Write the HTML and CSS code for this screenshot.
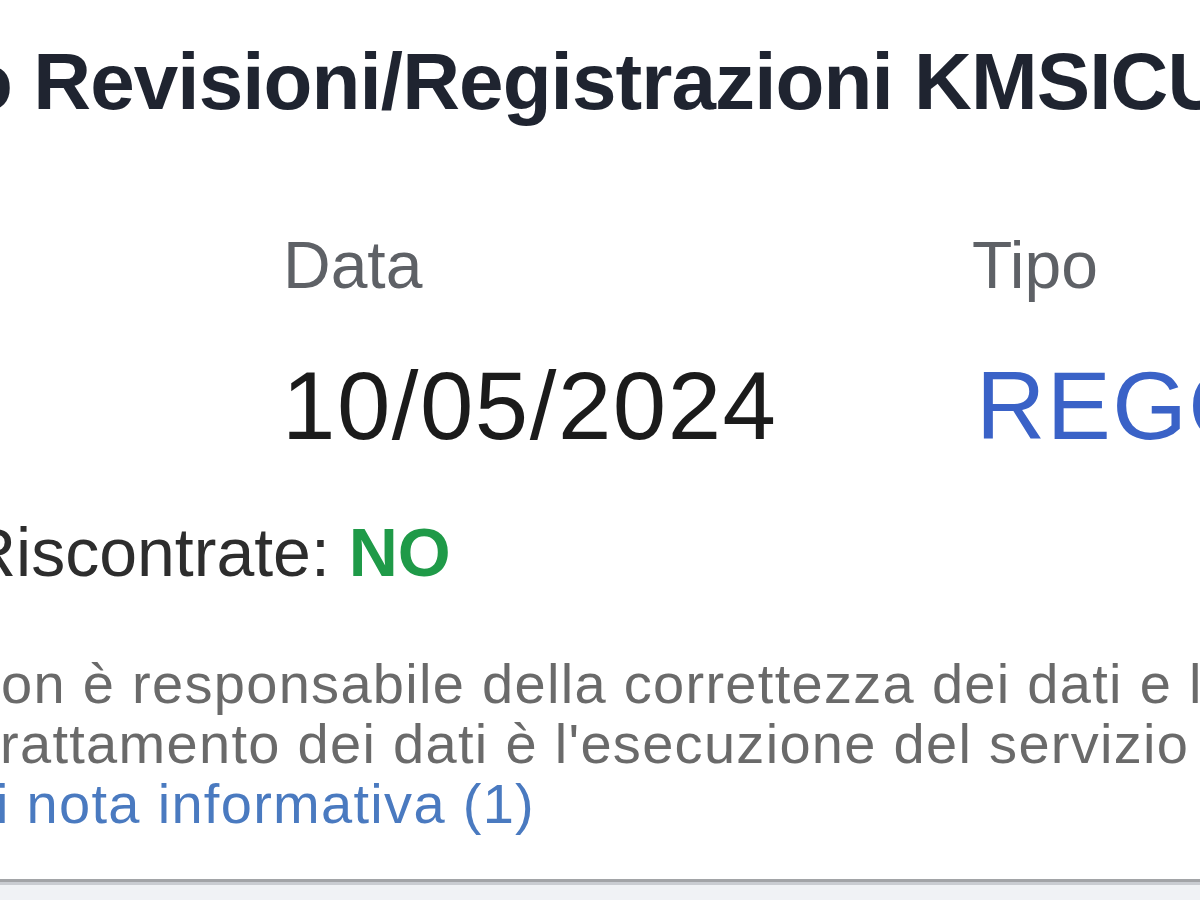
FILE: index.html
```html
<!DOCTYPE html>
<html lang="it">
<head>
<meta charset="utf-8">
<title>Revisioni/Registrazioni KMSICURO</title>
<link rel="stylesheet" href="styles.css">
</head>
<body>
<main class="card">
  <h1 class="title">o Revisioni/Registrazioni KMSICURO</h1>
  <div class="fields">
    <div class="field">
      <div class="label label-data">Data</div>
      <div class="value value-data">10/05/2024</div>
    </div>
    <div class="field">
      <div class="label">Tipo</div>
      <div class="value value-tipo">REGOLARE</div>
    </div>
  </div>
  <p class="issues">Riscontrate: <strong class="ok">NO</strong></p>
  <p class="note">
    <span class="line line-1">on è responsabile della correttezza dei dati e la</span>
    <span class="line line-2">rattamento dei dati è l'esecuzione del servizio</span>
    <a class="line line-3 link" href="#">i nota informativa (1)</a>
  </p>
</main>
<footer class="footer"></footer>
</body>
</html>
```

FILE: styles.css
```css
html, body {
  margin: 0;
  padding: 0;
  background: #ffffff;
}

body {
  width: 1200px;
  height: 900px;
  overflow: hidden;
  font-family: "Liberation Sans", Arial, sans-serif;
  display: flex;
  flex-direction: column;
}

.card {
  flex: none;
  padding-top: 42px;
  height: 882px;
  box-sizing: border-box;
  border-bottom: 3px solid #a2a4a7;
  white-space: nowrap;
}

.title {
  margin: 0 0 0 -36px;
  font-size: 80px;
  line-height: 80px;
  font-weight: 700;
  letter-spacing: -0.9px;
  color: #1f2430;
}

.fields {
  display: grid;
  grid-template-columns: 692px auto;
  padding-left: 280px;
  margin-top: 110px;
}

.label {
  font-size: 66px;
  line-height: 66px;
  color: #5e6166;
}

.label-data {
  margin-left: 3px;
}

.value {
  margin-top: 60px;
  font-size: 96px;
  line-height: 96px;
  letter-spacing: 1.5px;
  color: #1b1b1b;
}

.value-data {
  margin-left: 2px;
}

.value-tipo {
  margin-left: 4px;
  color: #3a62c7;
}

.issues {
  margin: 64px 0 0 -33px;
  font-size: 68px;
  line-height: 68px;
  color: #2d2d2d;
}

.ok {
  color: #1f9a48;
  font-weight: 700;
}

.note {
  margin: 68px 0 0 0;
  font-size: 56px;
  line-height: 60px;
  letter-spacing: 1.3px;
  color: #6a6a6a;
}

.line {
  display: block;
}

.line-1 {
  margin-left: 1px;
}

.line-3 {
  margin-left: -4px;
}

.link {
  color: #4a7ac0;
  text-decoration: none;
}

.footer {
  flex: 1;
  border-top: 3px solid #c9ccd1;
  background: #f0f2f5;
}
```
